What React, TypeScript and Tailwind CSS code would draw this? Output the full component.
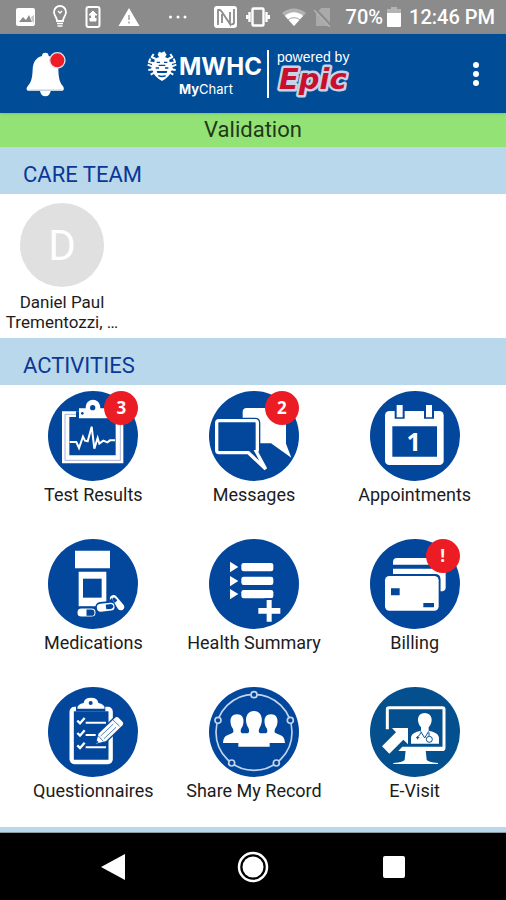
import type { ReactNode } from "react";

const BLUE = "#03479c";

function StatusBar() {
  return (
    <div className="flex h-[34px] items-center justify-between bg-[#8b8b8c] pl-4 pr-[11px] font-medium text-white">
      <div className="flex items-center">
        <svg className="mr-4 h-5 w-5" viewBox="0 0 20 20" aria-label="Picture">
          <rect x="0" y="1" width="19" height="18" rx="2" fill="#fff" />
          <path d="M3 15l4-5 3 3 3-5 3 7z" fill="#8b8b8c" />
          <path d="M15 10l3-2v8l-2-2z" fill="#c4c4c4" />
        </svg>
        <svg className="mr-4 h-6 w-4" viewBox="0 0 16 24" fill="none" stroke="#fff" strokeWidth="1.800" aria-label="Tip">
          <path d="M5 16C5 12 2 11 2 7a6 6 0 0 1 12 0c0 4-3 5-3 9z" />
          <path d="M5 18.500h6M5.500 21h5M6 6l2 2 2-2" strokeWidth="1.300" />
        </svg>
        <svg className="mr-4 h-[22px] w-[18px]" viewBox="0 0 18 22" aria-label="Update">
          <rect x="2.500" y="1" width="13" height="20" rx="2" fill="none" stroke="#fff" strokeWidth="2" />
          <path d="M9 5l4 4h-2.500v3h-3V9H5zM6 12v3h6v-3" fill="#fff" stroke="#fff" />
        </svg>
        <svg className="h-5 w-[22px]" viewBox="0 0 22 20" aria-label="Warning">
          <path d="M11 1L21.500 19H.5z" fill="#fff" />
          <path d="M11 8v5M11 14.500v2" stroke="#b8b8b8" strokeWidth="2" />
        </svg>
        <svg className="ml-7 h-1 w-5" viewBox="0 0 20 4" fill="#fff" aria-label="More notifications">
          <circle cx="2.500" cy="2" r="1.500" />
          <circle cx="10" cy="2" r="1.500" />
          <circle cx="17" cy="2" r="1.500" />
        </svg>
      </div>
      <div className="flex items-center text-xl">
        <svg className="mr-2 h-[22px] w-6" viewBox="0 0 24 22" aria-label="NFC">
          <rect x="0" y="0" width="23" height="22" rx="3" fill="#fff" />
          <path
            d="M4 19V4q2-1 4 2l8 12V6M8 17V8M16 18q3 1 4-1V3"
            fill="none"
            stroke="#8b8b8c"
            strokeWidth="1.800"
          />
        </svg>
        <svg className="mr-3 h-5 w-6" viewBox="0 0 24 20" fill="none" stroke="#fff" strokeWidth="2.400" aria-label="Vibrate">
          <rect x="6.500" y="1.500" width="11" height="17" rx="1" />
          <path d="M3.500 5v10M20.500 5v10M1 8v4M23 8v4" />
        </svg>
        <svg className="mr-2 h-[18px] w-6" viewBox="0 0 24 18" aria-label="Wi-Fi">
          <path d="M0 5C7-1 17-1 24 5L12 18z" fill="#b2b2b2" />
          <path d="M3 8c5-5 13-5 18 0l-9 10z" fill="#fff" />
          <path d="M6 12c3-3 9-3 12 0" fill="none" stroke="#a0a0a0" strokeWidth="1" />
        </svg>
        <svg className="mr-3.5 h-5 w-[18px]" viewBox="0 0 18 20" aria-label="No SIM">
          <path d="M7 1h8q1 0 1 1v16q0 1-1 1H3q-1 0-1-1V7z" fill="#aaaaab" />
          <path d="M1 2l16 17" stroke="#8b8b8c" strokeWidth="3" />
          <path d="M0 3l16 17" stroke="#b4b4b4" strokeWidth="1.500" />
        </svg>
        <span>70%</span>
        <svg className="ml-1 mr-2 h-5 w-[14px]" viewBox="0 0 14 20" aria-label="Battery">
          <path d="M4 0h6v2h4v5H0V2h4z" fill="#b4b4b4" />
          <path d="M0 6h14v13q0 1-1 1H1q-1 0-1-1z" fill="#fff" />
        </svg>
        <span>12:46 PM</span>
      </div>
    </div>
  );
}

function Crest() {
  return (
    <svg className="h-8 w-[30px]" viewBox="0 0 90 96" fill="#fff" aria-hidden="true">
      <path d="M32 14l4-9 8 3 8-4 7 10-6 9H38z" />
      <path d="M24 26q21-12 42 0l2 10q10 2 6 13l4 6-6 8q-2 16-27 30-25-14-27-30l-6-8 4-6q-4-11 6-13z" />
      <path
        d="M20 12l-6 9 12 6M10 26l-4 10 14 4M2 44l15 6M4 60l16-2M11 74l14-8M70 12l6 9-12 6M80 26l4 10-14 4M88 44l-15 6M86 60l-16-2M79 74l-14-8"
        fill="none"
        stroke="#fff"
        strokeWidth="6"
        strokeLinejoin="round"
      />
      <path d="M29 37h10M51 37h10M35 46h20M26 54h10M54 54h10M34 77q11 5 22 0" fill="none" stroke={BLUE} strokeWidth="4" />
      <path d="M29 63h32l-2 6H31z" fill={BLUE} />
    </svg>
  );
}

function AppHeader() {
  return (
    <header className="relative z-10 grid h-[79px] grid-cols-[1fr_auto_1fr] items-center bg-[#004c97] pl-3 pr-[18px] shadow">
      <button type="button" aria-label="Notifications" className="ml-3.5 h-[46px] w-10">
        <svg viewBox="0 0 120 138" className="h-[46px] w-10">
          <path
            d="M48 15a10 10 0 0 1 20 0c20 5 28 20 29 40 1 32 6 42 14 51 4 5 3 13-2 13H7c-6 0-7-8-2-13 8-9 14-19 15-51 1-20 9-35 28-40z"
            fill="#fff"
          />
          <path d="M42 120h32q-3 16-16 16t-16-16z" fill="#fff" />
          <path d="M10 116h98" stroke="#c5d5ea" strokeWidth="2" />
          <circle cx="94" cy="28" r="23" fill="#ee1c24" stroke="#dce5f2" strokeWidth="4" />
        </svg>
      </button>
      <div className="flex h-12 text-white">
        <Crest />
        <div className="ml-0.5 flex w-[84px] flex-col pt-1">
          <span className="font-[Inter,sans-serif] text-2xl font-bold leading-[26px]">MWHC</span>
          <span className="font-[Inter,sans-serif] text-[13px] leading-[18px]">
            <b>My</b>Chart
          </span>
        </div>
        <div className="ml-1 mr-1.5 w-0.5 bg-white" />
        <div className="flex flex-col">
          <span className="pl-0.5 font-['Liberation_Sans',sans-serif] text-[14px] leading-[14px]">powered by</span>
          <svg className="h-9 w-[78px] overflow-visible" viewBox="0 0 78 36">
            <text
              x="4"
              y="25"
              className="font-['DejaVu_Sans',sans-serif] text-[29px] font-bold italic"
              fill="#c8102e"
              stroke="#c9d3e6"
              strokeWidth="5"
              strokeLinejoin="round"
              paintOrder="stroke"
            >
              Epic
            </text>
          </svg>
        </div>
      </div>
      <button
        type="button"
        aria-label="More options"
        className="flex h-10 w-6 flex-col items-center justify-center gap-[3px] justify-self-end"
      >
        <span className="h-1.5 w-1.5 rounded-full bg-white" />
        <span className="h-1.5 w-1.5 rounded-full bg-white" />
        <span className="h-1.5 w-1.5 rounded-full bg-white" />
      </button>
    </header>
  );
}

function SectionTitle({ children }: { children: ReactNode }) {
  return (
    <h2 className="flex h-[47px] items-center bg-[#b9d8eb] pl-[23px] pt-2 text-[22px] text-[#0b3796]">{children}</h2>
  );
}

const testResults = (
  <svg viewBox="53 32 270 270">
    <path d="M95 93h184v156H95z" fill="#fff" />
    <path d="M104 102h166v138H104z" fill="none" stroke="#7d8fc8" strokeWidth="2" />
    <path d="M117 110h139v115H117z" fill={BLUE} />
    <path d="M137 93h100v28H137z" fill={BLUE} />
    <path d="M146 84h20c0-34 44-34 44 0h22v30h-86z" fill="#fff" />
    <circle cx="187" cy="82" r="8" fill={BLUE} />
    <circle cx="156" cy="99" r="4" fill={BLUE} />
    <path
      d="M118 185h20l8 18 12-34 6 12 8 2 12-44 8 66 10-32 5 17 12-9 12 5 8-6h15"
      fill="none"
      stroke="#fff"
      strokeWidth="6"
    />
  </svg>
);

const messages = (
  <svg viewBox="58 32 270 270">
    <path d="M171 83h106q12 0 12 12v95l16 42-61-43H171q-12 0-12-12V95q0-12 12-12z" fill="#fff" />
    <path
      d="M88 121h108q7 0 7 7v79q0 7-3 7l28 52-52-49H88q-7 0-7-7v-82q0-7 7-7z"
      fill={BLUE}
      stroke={BLUE}
      strokeWidth="18"
    />
    <path
      d="M88 121h108q7 0 7 7v79q0 7-3 7l28 52-52-49H88q-7 0-7-7v-82q0-7 7-7z"
      fill={BLUE}
      stroke="#fff"
      strokeWidth="10"
    />
  </svg>
);

const appointments = (
  <svg viewBox="59 32 270 270">
    <rect x="104" y="92" width="176" height="162" rx="13" fill="#fff" />
    <path d="M126 138h134v91H126z" fill={BLUE} />
    <path d="M133 88h30v27h-30zM221 88h30v27h-30z" fill={BLUE} />
    <path d="M139 74h18v37h-18zM227 74h18v37h-18z" fill="#fff" />
    <text x="190" y="213" textAnchor="middle" fill="#fff" className="font-['Open_Sans',sans-serif] text-[76px] font-bold">
      1
    </text>
  </svg>
);

const medications = (
  <svg viewBox="53 26 270 270">
    <path d="M134 61h105v53H134zM145 124h83v104h-83z" fill="#fff" />
    <path d="M158 145h56v57h-56z" fill={BLUE} />
    <g stroke={BLUE} strokeWidth="5">
      <rect x="139" y="232" width="59" height="29" rx="14" fill="#fff" />
      <path d="M171 240h12q7 0 7 7t-7 7h-12z" fill={BLUE} />
      <rect x="197" y="216" width="58" height="29" rx="14" fill="#fff" transform="rotate(-6 226 230)" />
    </g>
    <path d="M226 223l16-2q7 1 7 7t-7 8l-14 1z" fill={BLUE} />
    <path d="M239 209q-3-12 9-15 6-1 10 4l22 26q5 8-2 14-8 5-15-2l-13-22-6-11z" fill="#fff" />
    <path d="M246 206q1-6 7-4l8 8-8 8z" fill={BLUE} />
  </svg>
);

const healthSummary = (
  <svg viewBox="86 26 270 270" fill="#fff">
    <path d="M149 94l25 16-25 16zM149 137l25 15-25 16zM149 176l25 15-25 16z" />
    <rect x="183" y="98" width="96" height="25" rx="7" />
    <rect x="183" y="139" width="96" height="25" rx="7" />
    <rect x="183" y="179" width="96" height="25" rx="7" />
    <path d="M253 204h28v23h25v30h-25v23h-28v-23h-25v-30h25z" fill={BLUE} />
    <path d="M259 209h15v24h26v17h-26v24h-15v-24h-25v-17h25z" />
  </svg>
);

const billing = (
  <svg viewBox="59 26 270 270">
    <path d="M128 103v-8q0-12 12-12h134q12 0 12 12v8z" fill="#fff" />
    <path d="M128 115h158v57q0 11-16 11V143q-1-10-13-12H128z" fill="#fff" />
    <rect x="100" y="132" width="170" height="113" rx="16" fill={BLUE} />
    <rect x="104" y="137" width="161" height="104" rx="13" fill="#fff" />
    <path d="M122 174h26v21h-26zM219 218h32v13h-32z" fill={BLUE} />
  </svg>
);

const questionnaires = (
  <svg viewBox="82 19 270 270">
    <rect x="153" y="85" width="117" height="159" rx="8" fill="none" stroke="#fff" strokeWidth="13" />
    <path d="M166 77h88v15h-88z" fill={BLUE} />
    <path d="M170 84q0-14 19-17 2-16 22-16t22 16q19 3 19 17z" fill="#fff" />
    <circle cx="210" cy="67" r="6" fill={BLUE} />
    <path d="M170 120l8 8 14-16M170 157l8 8 14-16M170 194l8 8 14-16" fill="none" stroke="#fff" strokeWidth="7" />
    <path d="M195 126h61M195 163h30M195 200h61" stroke="#fff" strokeWidth="6" />
    <path
      d="M223 192l9-34 50-48q6-6 13 0l12 12q6 6 0 13l-50 48z"
      fill="#fff"
      stroke={BLUE}
      strokeWidth="4"
    />
    <path d="M233 166l15 16M276 117l21 20M240 166l38-36M250 174l36-34" stroke={BLUE} strokeWidth="2" />
    <path d="M224 190l4-11 6 6z" fill={BLUE} />
  </svg>
);

const shareRecord = (
  <svg viewBox="86 18 270 270">
    <circle cx="221" cy="154" r="114" fill="none" stroke="#c4d4ed" strokeWidth="5" />
    <g fill={BLUE} stroke="#c4d4ed" strokeWidth="5">
      <circle cx="221" cy="41" r="9" />
      <circle cx="113" cy="118" r="9" />
      <circle cx="330" cy="118" r="9" />
      <circle cx="154" cy="246" r="9" />
      <circle cx="288" cy="246" r="9" />
    </g>
    <path
      d="M128 186c2-20 7-21 27-29 6-3 5-9 2-15-9-12-12-42 13-42s22 30 13 42c-3 7-3 12 3 15h70c6-3 6-8 3-15-9-12-12-42 13-42s22 30 13 42c-3 7-4 12 2 15 20 8 25 9 27 29z"
      fill="#fff"
    />
    <path
      d="M174 197v-17c2-14 12-15 27-21 7-4 6-12 3-19-12-16-10-50 17-50s28 34 17 50c-4 8-4 15 3 19 15 6 25 7 27 21v17z"
      fill="#fff"
    />
  </svg>
);

const eVisit = (
  <svg viewBox="59 18 270 270">
    <rect x="111" y="80" width="170" height="125" rx="5" fill="none" stroke="#fff" strokeWidth="9" />
    <path d="M104 145h20l46-8 12 58-38 17h-40z" fill="#04508e" />
    <path d="M144 210l12-13h125v13z" fill="#fff" />
    <path d="M166 208h60l3 28q3 7 34 10v3H129v-3q32-3 34-10z" fill="#fff" />
    <path d="M125 141h48v49l-14-14-42 42-22-22 42-42z" fill="#fff" />
    <path
      d="M182 188v-18c2-13 12-17 30-21v-10c-14-16-13-43 11-43s27 27 12 43v10c18 4 29 8 31 21v18z"
      fill="#fff"
    />
    <path
      d="M211 151l12 20 12-20M212 154q-4 8-9 13M236 154v12M197 170h10M202 165v10"
      fill="none"
      stroke="#04508e"
      strokeWidth="3"
    />
    <circle cx="237" cy="175" r="9" fill="none" stroke="#04508e" strokeWidth="3" />
  </svg>
);

type Activity = { label: string; icon: ReactNode; badge?: string; tone?: string };

const activities: Activity[] = [
  { label: "Test Results", icon: testResults, badge: "3" },
  { label: "Messages", icon: messages, badge: "2" },
  { label: "Appointments", icon: appointments },
  { label: "Medications", icon: medications },
  { label: "Health Summary", icon: healthSummary },
  { label: "Billing", icon: billing, badge: "!" },
  { label: "Questionnaires", icon: questionnaires },
  { label: "Share My Record", icon: shareRecord },
  { label: "E-Visit", icon: eVisit, tone: "bg-[#04508e]" },
];

function ActivityButton({ label, icon, badge, tone = "bg-[#03479c]" }: Activity) {
  return (
    <button type="button" className="flex h-[148px] flex-col items-center">
      <span className={`relative h-[90px] w-[90px] rounded-full ${tone}`}>
        {icon}
        {badge && (
          <span className="absolute right-0 top-0 flex h-[34px] w-[34px] items-center justify-center rounded-full bg-[#ec1c24] font-['Open_Sans',sans-serif] text-[17px] font-bold text-white">
            {badge}
          </span>
        )}
      </span>
      <span className="mt-0.5 whitespace-nowrap text-lg leading-6 text-[#1c1c1c]">{label}</span>
    </button>
  );
}

export default function App() {
  return (
    <div className="flex min-h-screen flex-col bg-white font-[Roboto,sans-serif]">
      <StatusBar />
      <AppHeader />
      <div className="h-[34px] bg-[#93e276] text-center text-[22px] leading-[34px] text-[#1f3818]">Validation</div>
      <main className="flex grow flex-col">
        <section>
          <SectionTitle>CARE TEAM</SectionTitle>
          <div className="flex h-36 pt-[9px]">
            <button type="button" className="flex w-[124px] flex-col items-center">
              <span className="flex h-[84px] w-[84px] items-center justify-center rounded-full bg-[#e0e0e0] text-[42px] text-white">
                D
              </span>
              <span className="mt-[5px] text-[17px] leading-5 text-[#1c1c1c]">
                Daniel Paul
                <br />
                Trementozzi, …
              </span>
            </button>
          </div>
        </section>
        <section>
          <SectionTitle>ACTIVITIES</SectionTitle>
          <div className="grid grid-cols-3 pl-[13px] pr-[11px] pt-1.5">
            {activities.map((a) => (
              <ActivityButton key={a.label} {...a} />
            ))}
          </div>
        </section>
        <div className="-mt-2 h-1.5 border-b border-[#8c9aa3] bg-[#b9d8eb]" />
      </main>
      <nav className="grid h-[67px] grid-cols-[1fr_56px_1fr] items-center bg-black">
        <button type="button" aria-label="Back" className="mr-[99px] justify-self-end">
          <svg className="h-7 w-[26px]" viewBox="0 0 26 28">
            <path d="M25 1v26L1 14z" fill="#fff" />
          </svg>
        </button>
        <button type="button" aria-label="Home" className="justify-self-center">
          <svg className="h-8 w-8" viewBox="0 0 32 32">
            <circle cx="16" cy="16" r="14" fill="none" stroke="#fff" strokeWidth="2.500" />
            <circle cx="16" cy="16" r="10.500" fill="#fff" />
          </svg>
        </button>
        <button type="button" aria-label="Recent apps" className="ml-[102px] h-[22px] w-[22px] rounded-xs bg-white" />
      </nav>
    </div>
  );
}
